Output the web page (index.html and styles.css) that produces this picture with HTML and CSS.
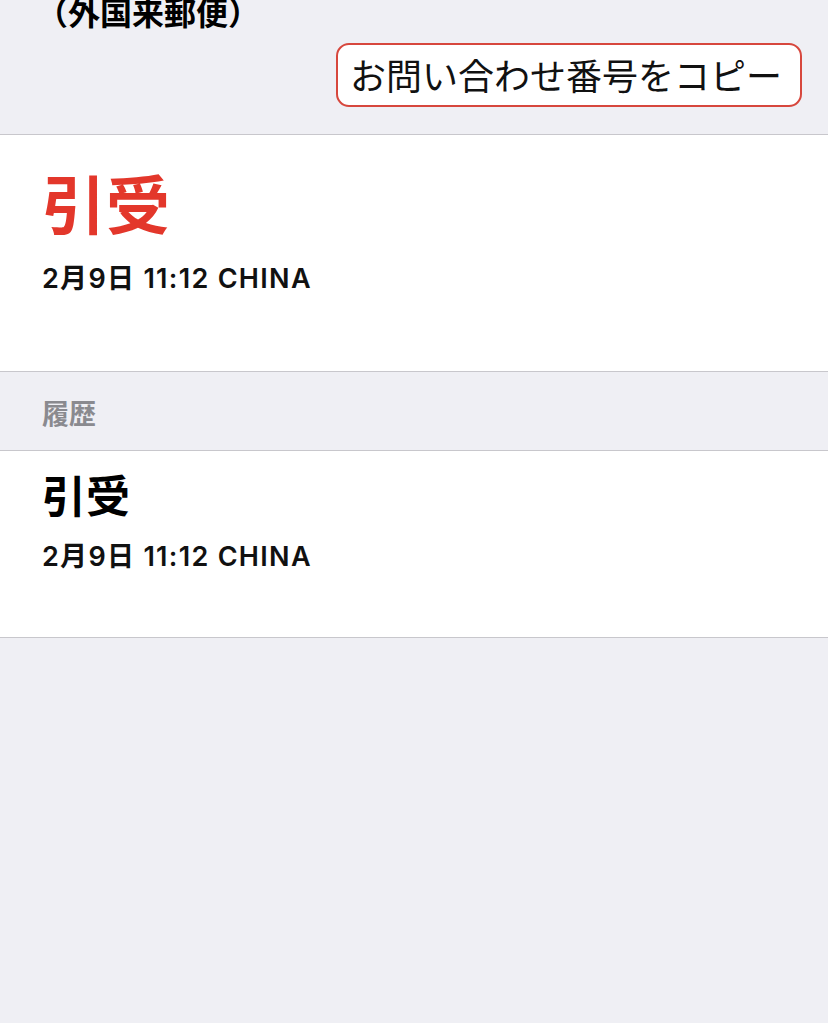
FILE: index.html
```html
<!DOCTYPE html>
<html lang="ja">
<head>
<meta charset="utf-8">
<link rel="stylesheet" href="styles.css">
</head>
<body>
<div class="page">
  <div class="top">
    <div class="title">（外国来郵便）</div>
    <button class="copy-btn">お問い合わせ番号をコピー</button>
  </div>
  <div class="status">
    <div class="status-name">引受</div>
    <div class="date">2月9日 11:12 CHINA</div>
  </div>
  <div class="section-head">履歴</div>
  <div class="history">
    <div class="hist-name">引受</div>
    <div class="date">2月9日 11:12 CHINA</div>
  </div>
</div>
</body>
</html>
```

FILE: styles.css
```css
html, body {
  margin: 0;
  padding: 0;
  background: #efeff4;
}
body {
  font-family: "Inter", "Noto Sans CJK JP", sans-serif;
  color: #000;
  width: 828px;
  height: 1023px;
  overflow: hidden;
}
.page {
  display: flex;
  flex-direction: column;
}
.top {
  display: flex;
  flex-direction: column;
  padding: 0 26px 27px 42px;
  border-bottom: 1px solid #c8c7cc;
}
.title {
  font-family: "Noto Sans CJK JP", sans-serif;
  font-weight: 700;
  font-size: 32px;
  line-height: 32px;
  height: 32px;
  margin-top: -5px;
  margin-left: -6px;
  margin-bottom: 16px;
}
.copy-btn {
  align-self: flex-end;
  width: 466px;
  height: 64px;
  box-sizing: border-box;
  border: 2px solid #d7473d;
  border-radius: 13px;
  background: #fff;
  font-family: "Noto Sans CJK JP", sans-serif;
  font-size: 36px;
  font-weight: 400;
  color: #111;
  padding: 0 0 2px 12px;
  text-align: left;
  line-height: 1;
  letter-spacing: 0;
}
.status {
  background: #fff;
  padding: 34px 42px 0;
  height: 202px;
  border-bottom: 1px solid #c8c7cc;
}
.status-name {
  font-family: "Noto Sans CJK JP", sans-serif;
  font-weight: 700;
  font-size: 64px;
  line-height: 64px;
  color: #e3372b;
}
.date {
  font-weight: 600;
  font-size: 27px;
  line-height: 30px;
  letter-spacing: 1.3px;
  margin-top: 31px;
  color: #111;
}
.section-head {
  font-family: "Noto Sans CJK JP", sans-serif;
  font-weight: 700;
  font-size: 27px;
  line-height: 30px;
  color: #8a8a8f;
  padding: 26px 42px 0;
  height: 52px;
  border-bottom: 1px solid #c8c7cc;
}
.history {
  background: #fff;
  padding: 21px 42px 0;
  height: 165px;
  border-bottom: 1px solid #c8c7cc;
}
.hist-name {
  font-family: "Noto Sans CJK JP", sans-serif;
  font-weight: 600;
  font-size: 44px;
  line-height: 44px;
}
.history .date {
  margin-top: 26px;
}
```
